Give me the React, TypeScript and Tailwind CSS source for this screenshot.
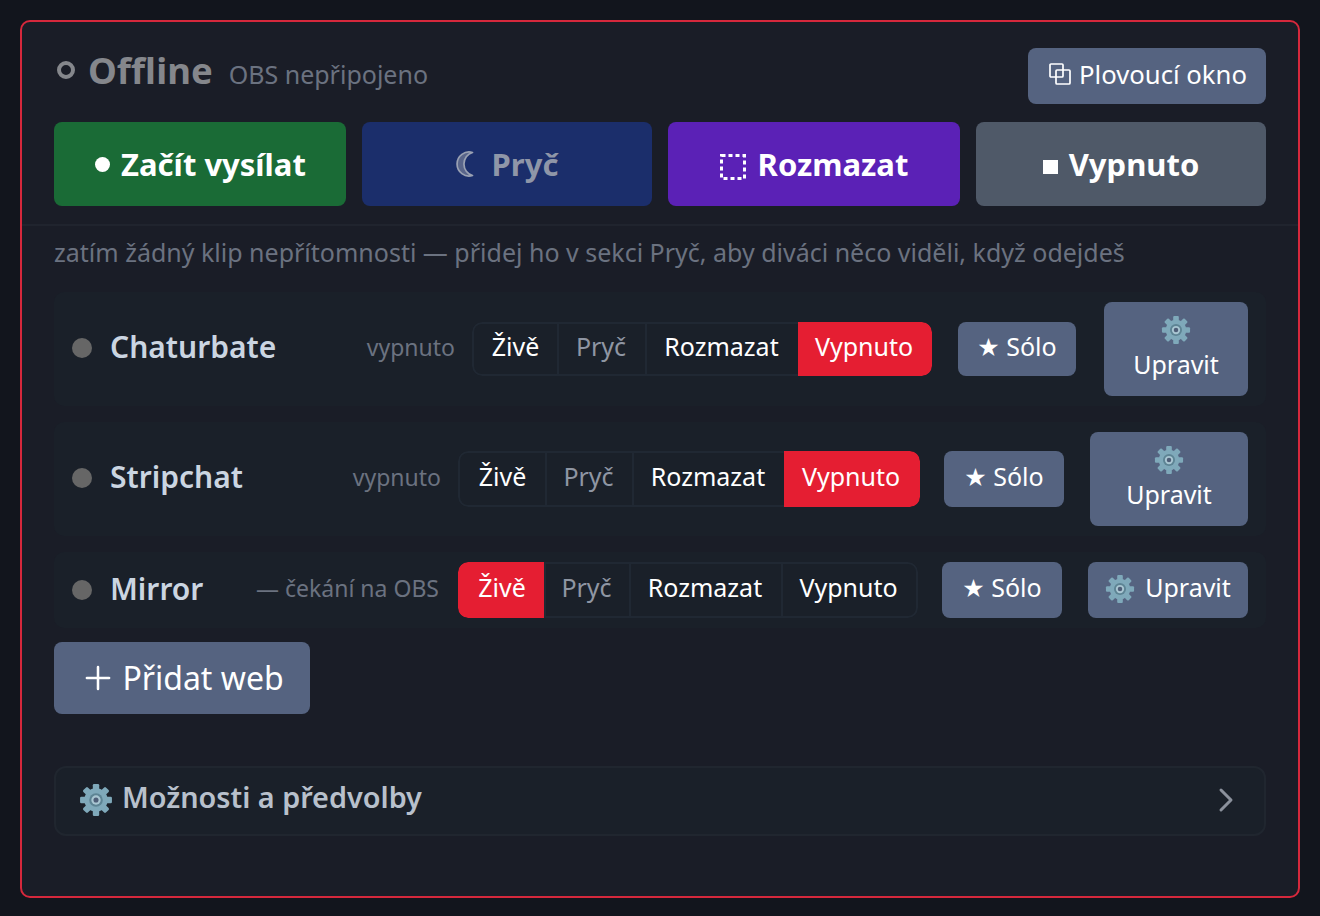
import { ChevronRight, Plus } from "lucide-react";

function Gear({ className }: { className: string }) {
  const teeth = [0, 45, 90, 135, 180, 225, 270, 315];
  return (
    <svg viewBox="0 0 32 32" className={className} aria-hidden="true">
      {teeth.map((a) => (
        <rect key={a} x="13" y="1" width="6" height="8" rx="1.2" fill="#7fa9ba" transform={`rotate(${a} 16 16)`} />
      ))}
      <circle cx="16" cy="16" r="11" fill="#7fa9ba" />
      <circle cx="16" cy="16" r="6.4" fill="#5d8494" />
      <circle cx="16" cy="16" r="4.4" fill="#a9c6d2" />
      <circle cx="16" cy="16" r="2.4" fill="#4f5f78" />
    </svg>
  );
}

function FloatIcon() {
  return (
    <svg viewBox="0 0 22 22" className="mt-[-3px] mr-2 h-[22px] w-[22px]" fill="none" stroke="white" strokeWidth="1.7" aria-hidden="true">
      <rect x="1" y="1" width="13" height="13" rx="1" />
      <rect x="7" y="7" width="14" height="14" rx="1" />
    </svg>
  );
}

function DashedBox() {
  return (
    <svg viewBox="0 0 26 26" className="mt-[6px] mr-3 h-[26px] w-[26px]" fill="none" stroke="white" strokeWidth="3" strokeDasharray="4 3" aria-hidden="true">
      <rect x="1.5" y="1.5" width="23" height="23" />
    </svg>
  );
}

function Moon() {
  return (
    <svg viewBox="0 0 18 26" className="mr-[18px] h-[26px] w-[18px]" aria-hidden="true">
      <path d="M16.5 1.5 A 12 12 0 1 0 16.5 24.5 A 12 12 0 0 1 16.5 1.5 Z" fill="#59658a" stroke="#9aa1b3" strokeWidth="1.7" strokeLinejoin="round" />
    </svg>
  );
}

interface SegProps {
  active: string;
  height: string;
  widths: string[];
}

function Segment({ active, height, widths }: SegProps) {
  const items = ["Živě", "Pryč", "Rozmazat", "Vypnuto"];
  return (
    <div className={`flex shrink-0 overflow-hidden rounded-[10px] ${height}`}>
      {items.map((t, i) => (
        <div
          key={t}
          className={`flex items-center justify-center border-y-2 pb-1 text-[25px] ${widths[i]} ${i === 0 ? "rounded-l-[10px] border-l-2" : "border-l-2 pr-[2px]"} ${
            i === 3 ? "rounded-r-[10px] border-r-2" : ""
          } ${
            t === active
              ? "border-transparent bg-[#e51e32] text-white"
              : t === "Pryč"
                ? "border-[#202833] text-[#8f96a3]"
                : "border-[#202833] text-white"
          }`}
        >
          {t}
        </div>
      ))}
    </div>
  );
}

export default function App() {
  return (
    <div className="h-[916px] w-[1320px] bg-[#12151d] p-5 font-['Noto_Sans','DejaVu_Sans',sans-serif]">
      <div className="h-[878px] rounded-[10px] border-2 border-[#d6283c] bg-[#1a1d27] px-8 pt-[26px]">
        {/* Status */}
        <div className="flex h-[56px] items-center justify-between">
          <div className="flex items-center pb-[12px]">
            <span className="ml-[3px] h-[18px] w-[18px] rounded-full border-[4px] border-[#85878c]" />
            <span className="ml-[13px] text-[36.5px] leading-none font-bold text-[#85878c]">Offline</span>
            <span className="mt-[9px] ml-4 text-[25px] leading-none text-[#6b7280]">OBS nepřipojeno</span>
          </div>
          <button className="flex h-[56px] w-[238px] items-center justify-center rounded-[8px] bg-[#556380] pb-[2px] pl-[2px] text-[25.7px] text-white">
            <FloatIcon />
            Plovoucí okno
          </button>
        </div>

        {/* Scene buttons */}
        <div className="mt-[18px] flex gap-4">
          <button className="flex h-[84px] w-[292px] items-center justify-center rounded-[8px] bg-[#1a6b36] pl-[1px] text-[31px] font-bold text-white">
            <span className="mr-[11px] h-[15px] w-[15px] rounded-full bg-white" />
            Začít vysílat
          </button>
          <button className="flex h-[84px] w-[290px] items-center justify-center rounded-[8px] bg-[#1b2e6b] text-[31px] font-bold text-[#8f96a8]">
            <Moon />
            Pryč
          </button>
          <button className="flex h-[84px] w-[292px] items-center justify-center rounded-[8px] bg-[#5b21b6] text-[31px] font-bold text-white">
            <DashedBox />
            Rozmazat
          </button>
          <button className="flex h-[84px] w-[290px] items-center justify-center rounded-[8px] bg-[#4f5968] text-[31px] font-bold text-white">
            <span className="mt-[6px] mr-[11px] h-[14px] w-[15px] bg-white" />
            Vypnuto
          </button>
        </div>

        <div className="-mx-8 mt-[18px] border-t-2 border-[#20242e]" />

        <p className="mt-[6px] h-[40px] text-[25px] leading-[40px] text-[#6b7280]">
          zatím žádný klip nepřítomnosti — přidej ho v sekci Pryč, aby diváci něco viděli, když odejdeš
        </p>

        {/* Sites */}
        <div className="mt-5 flex flex-col gap-4">
          <div className="flex h-[114px] items-center rounded-[10px] bg-[#1a2029] px-[18px]">
            <span className="mb-[2px] h-5 w-5 shrink-0 rounded-full bg-[#666666]" />
            <span className="ml-[18px] flex-1 pb-[6px] text-[30px] font-semibold text-[#cbd5e1]">Chaturbate</span>
            <span className="mr-[17px] pb-1 text-[23px] text-[#6b7280]">vypnuto</span>
            <Segment active="Vypnuto" height="h-[54px]" widths={["w-[85px]", "w-[88px]", "w-[153px]", "w-[134px]"]} />
            <button className="ml-[26px] flex h-[54px] w-[118px] items-center justify-center rounded-[8px] bg-[#556380] pb-1 text-[25px] text-white">
              ★ Sólo
            </button>
            <button className="ml-[28px] flex h-[94px] w-[144px] flex-col items-center justify-center rounded-[8px] bg-[#556380] pb-[3px] text-[25px] leading-[34px] text-white">
              <Gear className="mb-[2px] h-[30px] w-[30px]" />
              Upravit
            </button>
          </div>

          <div className="flex h-[114px] items-center rounded-[10px] bg-[#1a2029] px-[18px]">
            <span className="mb-[2px] h-5 w-5 shrink-0 rounded-full bg-[#666666]" />
            <span className="ml-[18px] flex-1 pb-[6px] text-[30px] font-semibold text-[#cbd5e1]">Stripchat</span>
            <span className="mr-[17px] pb-1 text-[23px] text-[#6b7280]">vypnuto</span>
            <Segment active="Vypnuto" height="h-[56px]" widths={["w-[87px]", "w-[87px]", "w-[152px]", "w-[136px]"]} />
            <button className="ml-[24px] flex h-[56px] w-[120px] items-center justify-center rounded-[8px] bg-[#556380] pb-1 text-[25px] text-white">
              ★ Sólo
            </button>
            <button className="ml-[26px] flex h-[94px] w-[158px] flex-col items-center justify-center rounded-[8px] bg-[#556380] pb-[3px] text-[25px] leading-[34px] text-white">
              <Gear className="mb-[2px] h-[30px] w-[30px]" />
              Upravit
            </button>
          </div>

          <div className="flex h-[76px] items-center rounded-[10px] bg-[#1a2029] px-[18px]">
            <span className="h-5 w-5 shrink-0 rounded-full bg-[#666666]" />
            <span className="ml-[18px] flex-1 pb-1 text-[30px] font-semibold text-[#cbd5e1]">Mirror</span>
            <span className="mr-[19px] pb-1 text-[23px] text-[#6b7280]">— čekání na OBS</span>
            <Segment active="Živě" height="h-[56px]" widths={["w-[86px]", "w-[85px]", "w-[152px]", "w-[137px]"]} />
            <button className="ml-[24px] flex h-[56px] w-[120px] items-center justify-center rounded-[8px] bg-[#556380] pb-1 text-[25px] text-white">
              ★ Sólo
            </button>
            <button className="ml-[26px] flex h-[56px] w-[160px] items-center justify-center rounded-[8px] bg-[#556380] pb-[5px] text-[25px] text-white">
              <Gear className="mt-[3px] mr-[10px] h-[30px] w-[30px]" />
              Upravit
            </button>
          </div>
        </div>

        <button className="mt-[14px] flex h-[72px] w-[256px] items-center justify-center rounded-[8px] bg-[#556380] text-[32px] text-white">
          <Plus className="mr-[5px] -ml-[1px] h-[38px] w-[38px]" strokeWidth={1.6} />
          Přidat web
        </button>

        <div className="mt-[52px] flex h-[70px] items-center rounded-[12px] border-2 border-[#20262f] bg-[#1a2029] pr-[18px] pl-[23px]">
          <Gear className="mr-[9px] mb-[2px] h-[34px] w-[34px]" />
          <span className="flex-1 pb-2 text-[28.8px] font-semibold text-[#b8c0cc]">Možnosti a předvolby</span>
          <ChevronRight className="mb-[2px] h-10 w-10 text-[#8b919c]" strokeWidth={1.8} />
        </div>
      </div>
    </div>
  );
}
